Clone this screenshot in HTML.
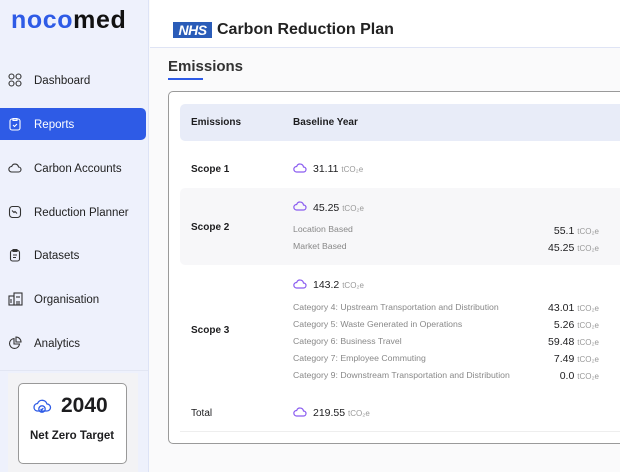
<!DOCTYPE html>
<html><head><meta charset="utf-8"><style>
*{margin:0;padding:0;box-sizing:border-box}
body{width:620px;height:472px;overflow:hidden;font-family:"Liberation Sans",sans-serif;background:#fafafb;position:relative;color:#1d1d1f}
.sb{position:absolute;left:0;top:0;width:149px;height:472px;background:#eef1fc;border-right:1px solid #dde3f6}
.logo{position:absolute;left:11px;top:6px;font-size:25px;font-weight:bold;letter-spacing:0.6px}
.logo .b{color:#2e5be6}.logo .k{color:#111}
.nav{position:absolute;left:0;width:146px;height:32px;font-size:11.5px;color:#222;display:flex;align-items:center;padding-left:34px;padding-top:2px}
.nav svg{position:absolute;left:8px;top:9px}
.nav.act{background:#2e5be6;color:#fff;border-radius:0 5px 5px 0}
.nz{position:absolute;left:8px;top:373px;width:130px;height:99px;background:#f3f3f5}
.nzc{position:absolute;left:18px;top:383px;width:109px;height:81px;background:#fff;border:1px solid #999;border-radius:5px}
.main{position:absolute;left:150px;top:0;right:0;height:48px;background:#fff;border-bottom:1px solid #dfe4f5}
.nhs{position:absolute;left:173px;top:22px;width:39px;height:16px;background:#2a5cb8;color:#fff;font-weight:bold;font-style:italic;font-size:14px;line-height:16px;text-align:center;letter-spacing:-0.5px}
.title{position:absolute;left:217px;top:21px;font-size:16px;color:#222;font-weight:bold}
.em{position:absolute;left:168px;top:58px;font-size:15px;font-weight:bold;color:#333}
.uline{position:absolute;left:168px;top:78px;width:35px;height:2px;background:#2e5be6}
.card{position:absolute;left:168px;top:91px;width:470px;height:353px;border:1px solid #9a9a9a;border-radius:5px;background:#fff}
.th{position:absolute;left:180px;top:104px;width:450px;height:37px;background:#e8ecf8;border-radius:5px}
.t{position:absolute;font-size:10px;white-space:nowrap}
.b{font-weight:bold}
.g{color:#888;font-size:8.7px}
.v{font-size:10.5px}
.u{color:#999;font-size:8px}
.cl{position:absolute}
</style></head><body>
<div class="sb">
<div class="logo"><span class="b">noco</span><span class="k">med</span></div>
<div class="nav" style="top:64px"><svg width="14" height="14" viewBox="0 0 14 14" fill="none" stroke="#333" stroke-width="1.1"><circle cx="3.5" cy="3.5" r="2.5"/><circle cx="10.5" cy="3.5" r="2.5"/><circle cx="3.5" cy="10.5" r="2.5"/><circle cx="10.5" cy="10.5" r="2.5"/></svg>Dashboard</div>
<div class="nav act" style="top:108px"><svg width="14" height="14" viewBox="0 0 14 14" fill="none" stroke="#fff" stroke-width="1.1"><rect x="2" y="2" width="10" height="11" rx="2"/><path d="M5 1.5h4v2H5z M5 8l1.5 1.5L9 7"/></svg>Reports</div>
<div class="nav" style="top:152px"><svg width="14" height="14" viewBox="0 0 14 14" fill="none" stroke="#333" stroke-width="1.1"><path d="M3.5 11h7a2.5 2.5 0 0 0 0-5 3.5 3.5 0 0 0-6.8-.5A2.7 2.7 0 0 0 3.5 11z"/></svg>Carbon Accounts</div>
<div class="nav" style="top:196px"><svg width="14" height="14" viewBox="0 0 14 14" fill="none" stroke="#333" stroke-width="1.1"><rect x="1.5" y="1.5" width="11" height="11" rx="3"/><path d="M4 5.5l2 2 1-1 2 2"/></svg>Reduction Planner</div>
<div class="nav" style="top:239px"><svg width="14" height="14" viewBox="0 0 14 14" fill="none" stroke="#333" stroke-width="1.1"><rect x="2.5" y="2.5" width="9" height="10.5" rx="2"/><path d="M5 1.5h4v2H5z M5 7h4 M5 9.5h3"/></svg>Datasets</div>
<div class="nav" style="top:283px"><svg width="15" height="14" viewBox="0 0 15 14" fill="none" stroke="#333" stroke-width="1.1"><rect x="1" y="4" width="5" height="9"/><rect x="6" y="1" width="8" height="12"/><path d="M3 7v4 M9 4v2 M11 4v2 M9 9v4 M11 9v4"/></svg>Organisation</div>
<div class="nav" style="top:327px"><svg width="14" height="14" viewBox="0 0 14 14" fill="none" stroke="#333" stroke-width="1.1"><path d="M6 2.5a5 5 0 1 0 5.5 5.5H6z M8 1a5 5 0 0 1 5 5H8z"/></svg>Analytics</div>
<div style="position:absolute;left:0;top:370px;width:148px;border-top:1px solid #e2e6f3"></div>
</div>
<div class="nz"></div>
<div class="nzc">
<svg style="position:absolute;left:13px;top:12px" width="20" height="20" viewBox="0 0 20 20" fill="none" stroke="#2e5be6" stroke-width="1.3"><path d="M5 15h10a3.5 3.5 0 0 0 0-7 5 5 0 0 0-9.5-.5A3.8 3.8 0 0 0 5 15z"/><circle cx="10" cy="13" r="3.2"/><path d="M8.6 13l1 1 1.7-1.8"/></svg>
<div class="t b" style="left:42px;top:10px;font-size:21px">2040</div>
<div class="t b" style="left:11px;top:46px;font-size:11.5px">Net Zero Target</div>
</div>
<div class="main"></div>
<div class="nhs">NHS</div>
<div class="title">Carbon Reduction Plan</div>
<div class="em">Emissions</div><div class="uline"></div>
<div class="card"></div>
<div class="th"></div>
<div class="t b" style="left:191px;top:117px">Emissions</div>
<div class="t b" style="left:293px;top:117px">Baseline Year</div>
<div style="position:absolute;left:180px;top:188px;width:450px;height:77px;background:#f7f7f9;border-radius:5px"></div>
<div style="position:absolute;left:180px;top:431px;width:450px;border-top:1px solid #eee"></div>
<div class="t b" style="left:191px;top:164px">Scope 1</div>
<div class="t b" style="left:191px;top:222px">Scope 2</div>
<div class="t b" style="left:191px;top:325px">Scope 3</div>
<div class="t" style="left:191px;top:408px">Total</div>
<svg width="0" height="0" style="position:absolute"><defs><g id="c"><path d="M3.5 11h7a2.5 2.5 0 0 0 0-5 3.5 3.5 0 0 0-6.8-.5A2.7 2.7 0 0 0 3.5 11z" fill="none" stroke="#8a5cf0" stroke-width="1.2"/></g></defs></svg>
<svg class="cl" style="left:293px;top:161px" width="14" height="14"><use href="#c"/></svg>
<div class="t v" style="left:313px;top:163px">31.11 <span class="u">tCO₂e</span></div>
<svg class="cl" style="left:293px;top:199px" width="14" height="14"><use href="#c"/></svg>
<div class="t v" style="left:313px;top:202px">45.25 <span class="u">tCO₂e</span></div>
<div class="t g" style="left:293px;top:224px">Location Based</div>
<div class="t g" style="left:293px;top:241px">Market Based</div>
<div class="t v" style="right:21px;top:225px">55.1 <span class="u">tCO₂e</span></div>
<div class="t v" style="right:21px;top:242px">45.25 <span class="u">tCO₂e</span></div>
<svg class="cl" style="left:293px;top:277px" width="14" height="14"><use href="#c"/></svg>
<div class="t v" style="left:313px;top:279px">143.2 <span class="u">tCO₂e</span></div>
<div class="t g" style="left:293px;top:302px">Category 4: Upstream Transportation and Distribution</div>
<div class="t g" style="left:293px;top:319px">Category 5: Waste Generated in Operations</div>
<div class="t g" style="left:293px;top:336px">Category 6: Business Travel</div>
<div class="t g" style="left:293px;top:353px">Category 7: Employee Commuting</div>
<div class="t g" style="left:293px;top:370px">Category 9: Downstream Transportation and Distribution</div>
<div class="t v" style="right:21px;top:302px">43.01 <span class="u">tCO₂e</span></div>
<div class="t v" style="right:21px;top:319px">5.26 <span class="u">tCO₂e</span></div>
<div class="t v" style="right:21px;top:336px">59.48 <span class="u">tCO₂e</span></div>
<div class="t v" style="right:21px;top:353px">7.49 <span class="u">tCO₂e</span></div>
<div class="t v" style="right:21px;top:370px">0.0 <span class="u">tCO₂e</span></div>
<svg class="cl" style="left:293px;top:405px" width="14" height="14"><use href="#c"/></svg>
<div class="t v" style="left:313px;top:407px">219.55 <span class="u">tCO₂e</span></div>
</body></html>
